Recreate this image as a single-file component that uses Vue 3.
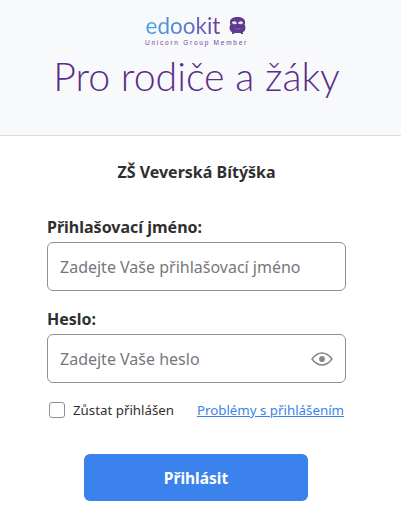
<script setup>
import { ref } from 'vue'

const username = ref('')
const password = ref('')
const remember = ref(false)
</script>

<template>
  <div class="page">
    <header class="head">
      <div class="logo">
        <div class="logo-row">
          <span class="logo-text">edookit</span>
          <svg class="owl" width="19" height="19" viewBox="0 0 20 20">
            <path d="M2 6.500C2 3 5.500 1 10 1s8 2 8 5.500c0 1-.2 1.800-.5 2.500 1 2 1.200 4 .3 6-.5 1-1.300 1.700-2.300 2.200l.5 1.800h-2l-1-1.200H7L6 19H4l.5-1.800c-1-.5-1.800-1.200-2.300-2.200-.9-2-.7-4 .3-6C2.200 8.300 2 7.500 2 6.500Z" fill="#5d3a8e" />
            <path d="M4 6.800c1.800-1.800 4-1.500 5.500 .8-1.500 1.700-4.300 1.500-5.500-.8ZM16 6.800c-1.800-1.800-4-1.500-5.500 .8 1.500 1.700 4.300 1.500 5.500-.8Z" fill="#e9e3f2" />
            <path d="M7 13q3 2 6 0" stroke="#8a6db5" stroke-width="1" fill="none" />
          </svg>
        </div>
        <div class="logo-sub">Unicorn Group Member</div>
      </div>
      <h1 class="title">Pro rodiče a žáky</h1>
    </header>

    <main class="body">
      <div class="school">ZŠ Veverská Bítýška</div>

      <form class="form" @submit.prevent>
        <label class="label" for="login">Přihlašovací jméno:</label>
        <input id="login" v-model="username" class="input" placeholder="Zadejte Vaše přihlašovací jméno" />

        <label class="label second" for="pass">Heslo:</label>
        <div class="pass-wrap">
          <input id="pass" v-model="password" class="input" type="password" placeholder="Zadejte Vaše heslo" />
          <svg class="eye" width="22" height="14" viewBox="0 0 22 14" fill="none">
            <path d="M1 7C4 3 7.200 1 11 1s7 2 10 6c-3 4-6.200 6-10 6S4 11 1 7Z" stroke="#85858a" stroke-width="1.400" />
            <circle cx="11" cy="7" r="2.900" fill="#85858a" />
          </svg>
        </div>

        <div class="options">
          <label class="remember">
            <input v-model="remember" class="check" type="checkbox" />
            <span>Zůstat přihlášen</span>
          </label>
          <a class="link" href="#">Problémy s přihlášením</a>
        </div>

        <button class="submit" type="submit">Přihlásit</button>
      </form>
    </main>
  </div>
</template>

<style scoped>
.page {
  width: 401px;
  height: 512px;
  overflow: hidden;
  background: #fff;
  font-family: "Noto Sans", sans-serif;
  color: #2f2f2f;
}

.head {
  height: 135px;
  background: #f8f9fa;
  border-bottom: 1px solid #dedede;
  display: flex;
  flex-direction: column;
  align-items: center;
  padding-right: 8px;
}

.logo {
  height: 50px;
  padding-top: 12px;
  box-sizing: border-box;
  display: flex;
  flex-direction: column;
  align-items: center;
}

.logo-row {
  display: flex;
  align-items: center;
  gap: 8px;
  height: 27px;
}

.logo-text {
  font-family: "Lato", sans-serif;
  font-weight: 400;
  font-size: 22.500px;
  line-height: 27px;
  background: linear-gradient(90deg, #3fa6e3, #5f78cc 55%, #6a3c98);
  -webkit-background-clip: text;
  background-clip: text;
  color: transparent;
}

.owl {
  display: block;
}

.logo-sub {
  font-family: "Liberation Sans", sans-serif;
  font-size: 6.500px;
  line-height: 8px;
  letter-spacing: 1.750px;
  color: #6f4a9c;
}

.title {
  margin: 0;
  font-family: "Lato", sans-serif;
  font-weight: 300;
  font-size: 39.300px;
  line-height: 52px;
  color: #5b2d8c;
}

.body {
  padding: 24px 55px 0 47px;
}

.school {
  text-align: center;
  font-weight: 700;
  font-size: 16px;
  line-height: 24px;
}

.form {
  margin-top: 31px;
}

.label {
  display: block;
  font-weight: 700;
  font-size: 16px;
  line-height: 24px;
  margin-bottom: 3px;
}

.second {
  margin-top: 16px;
}

.input {
  display: block;
  width: 299px;
  height: 49px;
  box-sizing: border-box;
  border: 1px solid #8f8f8f;
  border-radius: 6px;
  padding: 0 12px;
  font-family: inherit;
  font-size: 16px;
  background: #fff;
  outline: none;
}

.input::placeholder {
  color: #77777c;
  opacity: 1;
}

.pass-wrap {
  position: relative;
  width: 299px;
}

.eye {
  position: absolute;
  right: 13px;
  top: 18px;
}

.options {
  display: flex;
  align-items: center;
  justify-content: space-between;
  width: 295px;
  margin: 18px 0 0 2px;
  height: 18px;
  font-size: 13.300px;
}

.remember {
  display: flex;
  align-items: center;
  gap: 8px;
}

.check {
  appearance: none;
  width: 16px;
  height: 16px;
  margin: 0;
  border: 1px solid #8f8f8f;
  border-radius: 3px;
  background: #fff;
}

.link {
  color: #3b82ec;
  text-decoration: underline;
}

.submit {
  display: block;
  width: 224px;
  height: 47px;
  margin: 35px 0 0 37px;
  border: none;
  border-radius: 6px;
  background: #3b82ec;
  color: #fff;
  font-family: inherit;
  font-weight: 700;
  font-size: 15.500px;
}
</style>
